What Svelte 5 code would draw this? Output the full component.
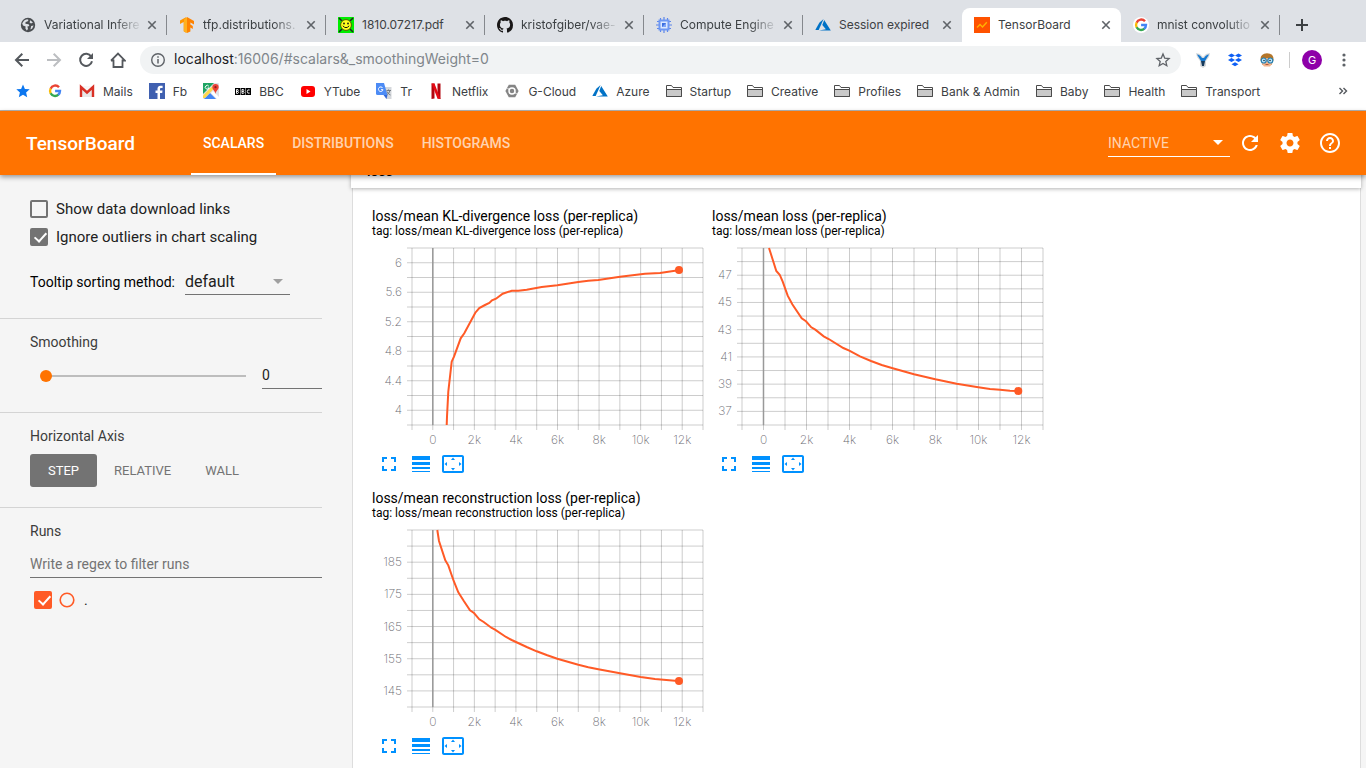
<script>
  const tabs = [
    { icon: 'globe', title: 'Variational Infere', fade: true },
    { icon: 'tf', title: 'tfp.distributions.', fade: true },
    { icon: 'smile', title: '1810.07217.pdf' },
    { icon: 'github', title: 'kristofgiber/vae-', fade: true },
    { icon: 'chip', title: 'Compute Engine', fade: true },
    { icon: 'azure', title: 'Session expired' },
    { icon: 'tb', title: 'TensorBoard', active: true },
    { icon: 'googleround', title: 'mnist convolutio', fade: true },
  ];
  const bookmarks = [
    { icon: 'star' }, { icon: 'google' }, { icon: 'gmail', title: 'Mails' }, { icon: 'fb', title: 'Fb' },
    { icon: 'maps' }, { icon: 'bbc', title: 'BBC' }, { icon: 'yt', title: 'YTube' }, { icon: 'tr', title: 'Tr' },
    { icon: 'netflix', title: 'Netflix' }, { icon: 'gcloud', title: 'G-Cloud' }, { icon: 'azure', title: 'Azure' },
    { icon: 'folder', title: 'Startup' }, { icon: 'folder', title: 'Creative' }, { icon: 'folder', title: 'Profiles' },
    { icon: 'folder', title: 'Bank & Admin' }, { icon: 'folder', title: 'Baby' }, { icon: 'folder', title: 'Health' },
    { icon: 'folder', title: 'Transport' },
  ];
  const xTicks = ['0', '2k', '4k', '6k', '8k', '10k', '12k'];
  const charts = [
    {
      title: 'loss/mean KL-divergence loss (per-replica)', left: 40, rows: 12, first: 1,
      labels: ['6', '5.6', '5.2', '4.8', '4.4', '4'],
      points: [[34.7,177],[35,168.7],[36.3,143.7],[39.7,113.7],[42,108.7],[48.7,90.3],[52.3,85.3],[63.3,64.7],[67.3,60],[73,57],[77.3,55],[80,52.3],[84,50.7],[90.7,45.7],[99.7,42.7],[106.3,42.7],[114.7,41.7],[129.7,39],[145.3,37.3],[166.3,34],[176.3,32.7],[186.3,32],[208,28.7],[233,25.7],[248,25],[263,22.7],[267,22]],
    },
    {
      title: 'loss/mean loss (per-replica)', left: 30, rows: 13, first: 2,
      labels: ['47', '45', '43', '41', '39', '37'],
      points: [[27,0],[29,6.3],[34.3,23],[37.7,26.7],[40.7,33.7],[45.7,47.7],[50.3,56.3],[59.7,70.3],[64,73.3],[69.3,79.3],[73.3,81.7],[81.7,88.3],[86.7,91],[101.3,100],[107.3,102.7],[118,108.3],[129,113],[139.7,117],[150.7,120.3],[172,126.3],[193.3,131.3],[214.7,135.7],[236.3,139.3],[248,141],[258,141.7],[268,142.7],[276.3,143]],
    },
    {
      title: 'loss/mean reconstruction loss (per-replica)', left: 40, rows: 11, first: 2,
      labels: ['185', '175', '165', '155', '145'],
      points: [[25.3,0],[27,11],[33.3,30.3],[36.3,35.3],[41.7,51],[46.3,62.3],[52,71.3],[58,80.3],[62,83],[67.3,89.3],[71.7,92],[79.7,98],[83,99.7],[94,107],[99.7,110],[114.7,117],[124.7,121.3],[135.3,125.3],[145.3,128.7],[166.3,134.7],[176.3,137.3],[186.3,139.3],[208,143.3],[228.7,147],[243,149],[263,150.7],[267,151]],
    },
  ];
  const H = 177;
  let showLinks = $state(false);
  let ignoreOutliers = $state(true);
  let runOn = $state(true);
  let smoothing = $state(0);
  let axis = $state('STEP');
  let pane = $state('SCALARS');
</script>

{#snippet glyph(name)}
  <svg class="fav" width="16" height="16" viewBox="0 0 16 16" aria-hidden="true">
    {#if name === 'globe'}
      <circle cx="8" cy="8" r="7.2" fill="#4a4d51" />
      <path d="M2.2 6.5C3.2 4 5 2.6 7.2 2.2L8.6 3 7.4 4.6 5.6 5 5.4 6.8 8.6 7.2 9.4 9 7.4 9.6 8 12 6.8 13.6 5.4 11.4 5.6 9.4 3 8.4ZM10.2 3.2 13 5.4 11 6.6 9.6 5.4ZM11.2 9 13.6 8.6 12.2 11.6 10.4 12.6Z" fill="#dee1e6" />
    {:else if name === 'tf'}
      <path d="M7.4 0 1 3.6V7l3.6-2v9.2L7.4 16Z" fill="#ff9500" />
      <path d="M8 0 15 4v3.4l-3.6-2v2.2l2.4 1.4v3l-2.4-1.4v4L8 16Z" fill="#ff8200" />
      <path d="M5 2.5 8 .3v15.6l-3-1.7Z" fill="#ffb01e" />
    {:else if name === 'smile'}
      <rect width="16" height="16" fill="#00ee00" />
      <path d="M1 1 4 4M15 1l-3 3M1 15l3-3M15 15l-3-3" stroke="#222" stroke-width="1.5" />
      <circle cx="8" cy="8" r="5.4" fill="#ffff20" stroke="#554a00" stroke-width=".9" />
      <circle cx="6" cy="6.5" r=".9" fill="#111" /><circle cx="10" cy="6.5" r=".9" fill="#111" />
      <path d="M4.8 8.8Q8 12.5 11.2 8.8" fill="none" stroke="#111" />
    {:else if name === 'github'}
      <path fill="#191717" d="M8 0C3.58 0 0 3.58 0 8c0 3.54 2.29 6.53 5.47 7.59.4.07.55-.17.55-.38 0-.19-.01-.82-.01-1.49-2.01.37-2.53-.49-2.69-.94-.09-.23-.48-.94-.82-1.13-.28-.15-.68-.52-.01-.53.63-.01 1.08.58 1.23.82.72 1.21 1.87.87 2.33.66.07-.52.28-.87.51-1.07-1.78-.2-3.64-.89-3.64-3.95 0-.87.31-1.59.82-2.15-.08-.2-.36-1.02.08-2.12 0 0 .67-.21 2.2.82.64-.18 1.32-.27 2-.27s1.36.09 2 .27c1.53-1.04 2.2-.82 2.2-.82.44 1.1.16 1.92.08 2.12.51.56.82 1.27.82 2.15 0 3.07-1.87 3.75-3.65 3.95.29.25.54.73.54 1.48 0 1.07-.01 1.93-.01 2.2 0 .21.15.46.55.38A8.01 8.01 0 0 0 16 8c0-4.42-3.58-8-8-8Z" />
    {:else if name === 'chip'}
      <path d="M4.5 1v14M8 0v16M11.5 1v14M1 4.5h14M0 8h16M1 11.5h14" stroke="#5c85ea" stroke-width="1.2" />
      <rect x="2.5" y="2.5" width="11" height="11" fill="#6f98f3" />
      <rect x="4.5" y="4.5" width="7" height="7" fill="#dce8ff" />
      <path d="M6 6h4v4H6Z" fill="#3c6fe0" /><path d="M6 10l4-4v4Z" fill="#7fa5f8" />
    {:else if name === 'azure'}
      <path d="M8.6 2 4.3 5.8.3 13h3.4Z" fill="#0072c6" />
      <path d="M9.2 3 7.3 8l3.6 4.3L4 13.6h11.8Z" fill="#0072c6" />
    {:else if name === 'tb'}
      <rect width="16" height="16" fill="#ff5200" />
      <path d="M3 10.5 6 7.5 8.5 10 12.8 5.2" fill="none" stroke="#ffb300" stroke-width="1.4" />
    {:else if name === 'google' || name === 'googleround'}
      {#if name === 'googleround'}<circle cx="8" cy="8" r="8" fill="#fff" />{/if}
      <g fill="none" stroke-width="2.4">
        <path d="M12 4.3A5 5 0 0 0 3.6 5.7" stroke="#ea4335" />
        <path d="M3.7 5.5a5 5 0 0 0 0 5" stroke="#fbbc05" />
        <path d="M3.6 10.3a5 5 0 0 0 7.8 1.3" stroke="#34a853" />
        <path d="M11.2 11.8A5 5 0 0 0 13 8H8.1" stroke="#4285f4" />
      </g>
    {:else if name === 'star'}
      <path d="m8 1.5 1.9 4.4 4.8.4-3.6 3.2 1.1 4.7L8 11.7l-4.2 2.5 1.1-4.7L1.3 6.3l4.8-.4Z" fill="#0b76ef" />
    {:else if name === 'gmail'}
      <path d="M1 3h14v11H1Z" fill="#e8e8e8" />
      <path d="M3 4.5 8 9l5-4.5V3H3Z" fill="#f7f7f7" />
      <path d="M2 14V4l6 5.5L14 4v10" fill="none" stroke="#d93025" stroke-width="2.4" />
    {:else if name === 'fb'}
      <rect width="16" height="16" fill="#4060b0" />
      <path d="M11 16v-6h2.2l.3-2.4H11V6.2c0-.8.3-1.2 1.3-1.2h1.3V2.7h-2C9.4 2.6 8.500 4 8.500 5.800v1.800H6.500V10h2v6Z" fill="#fff" />
    {:else if name === 'maps'}
      <rect width="16" height="16" rx="1" fill="#dfe3e8" />
      <path d="M0 0h11L0 11Z" fill="#1fa463" /><path d="M1 16 7 10l6 6Z" fill="#4285f4" />
      <path d="M0 12.5 9 3.500l2 2L2 15H0Z" fill="#ffd84c" /><path d="m8 10 2-2 6 6v2h-2Z" fill="#fff" />
      <path d="M5.800 3.200a1.900 1.900 0 1 0 .2 1.800H4.500" fill="none" stroke="#fff" />
      <path d="M12.500 1a3.200 3.200 0 0 0-3.200 3.200c0 2.400 2.700 3.200 3.200 6.800.5-3.600 3.200-4.400 3.200-6.800A3.200 3.200 0 0 0 12.500 1Z" fill="#ea4335" /><circle cx="12.5" cy="4.2" r="1.1" fill="#8c1d18" />
    {:else if name === 'bbc'}
      <g fill="#000"><rect x="0" y="5" width="5" height="7" /><rect x="5.5" y="5" width="5" height="7" /><rect x="11" y="5" width="5" height="7" /></g>
      <g fill="none" stroke="#fff" stroke-width=".9"><path d="M1.500 6.500h1.400q.8 1-.1 1.900h-1.300 1.400q1.200 1 0 2H1.500ZM7 6.500h1.400q.8 1-.1 1.900H7h1.400q1.200 1 0 2H7ZM14.700 7q-2.400-1-2.400 1.500t2.400 1.600" /></g>
    {:else if name === 'yt'}
      <rect x="1" y="3" width="14" height="11" rx="3" fill="#f00" /><path d="m6.500 6 4 2.500-4 2.500Z" fill="#fff" />
    {:else if name === 'tr'}
      <path d="M6 4h9.500v12H10Z" fill="#d5d8dc" /><path d="M0 0h8l3.500 12H1.500Q0 12 0 10.500Z" fill="#4c8bf5" />
      <path d="m7.500 12 3 4 1-4Z" fill="#3367d6" />
      <path d="M6.700 5A2.300 2.300 0 1 0 7 6.700H5" fill="none" stroke="#fff" /><path d="M10.500 7.500H15M12.500 6.500v1M14 7.500q-.8 3.200-3 4M11 8.500q1 2.500 3.500 3.500" fill="none" stroke="#6b747c" stroke-width=".9" />
    {:else if name === 'netflix'}
      <path d="M3.500.5h3v15l-3 .5ZM9.500.5h3V16l-3-.5Z" fill="#b1060f" /><path d="M3.500.5h3l6 15.500-3-.5Z" fill="#e50914" />
    {:else if name === 'gcloud'}
      <path d="M4.800 1.800h6.400L14.600 8l-3.400 6.200H4.800L1.400 8Z" fill="#858585" /><circle cx="8" cy="8" r="3" fill="none" stroke="#fff" stroke-width="1.5" /><path d="M3.500 5.500l2 1M12.500 10.500l-2-1" stroke="#fff" />
    {:else if name === 'folder'}
      <path d="M.5 13.500v-11h5l1.500 2h8.500v9Z" fill="#fff" stroke="#4b4b4b" />
      <path d="M.5 13.500v-7h15v7Z" fill="#c9c9c9" stroke="#4b4b4b" />
    {/if}
  </svg>
{/snippet}

{#snippet mat(d)}
  <svg width="24" height="24" viewBox="0 0 24 24" fill="currentColor" aria-hidden="true"><path {d} /></svg>
{/snippet}

<div class="window">
  <div class="strip">
    {#each tabs as t}
      <div class="tab" class:active={t.active}>
        {@render glyph(t.icon)}
        <span class="ttl" class:fade={t.fade}>{t.title}</span>
        <button class="close" aria-label="Close tab">
          <svg width="16" height="16" viewBox="0 0 16 16"><path d="m4.300 4.300 7.400 7.400m0-7.400-7.400 7.400" stroke="#5f6368" stroke-width="1.6" /></svg>
        </button>
      </div>
    {/each}
    <button class="plus" aria-label="New tab"><svg width="16" height="16" viewBox="0 0 16 16"><path d="M8 2v12M2 8h12" stroke="#3c4043" stroke-width="2" /></svg></button>
  </div>

  <div class="toolbar">
    <button class="nav" aria-label="Back"><svg width="16" height="16" viewBox="0 0 16 16"><path d="M15 8H2.500M8.300 1.700 2 8l6.300 6.300" fill="none" stroke="#54585d" stroke-width="2" /></svg></button>
    <button class="nav" aria-label="Forward"><svg width="16" height="16" viewBox="0 0 16 16"><path d="M1 8h12.500M7.700 1.700 14 8l-6.300 6.300" fill="none" stroke="#bcbec1" stroke-width="2" /></svg></button>
    <button class="nav" aria-label="Reload"><svg width="16" height="16" viewBox="0 0 16 16"><path d="M13.200 4.600A6 6 0 1 0 14 9.200" fill="none" stroke="#54585d" stroke-width="2" /><path d="M15 1v6H9Z" fill="#54585d" /></svg></button>
    <button class="nav" aria-label="Home"><svg width="16" height="16" viewBox="0 0 16 16"><path d="M3.500 7.500V15h9V7.500M1 8.700 8 1.600l7 7.100h-3M1 8.700h3" fill="none" stroke="#54585d" stroke-width="1.8" /></svg></button>
    <div class="pill">
      <svg width="16" height="16" viewBox="0 0 16 16"><circle cx="8" cy="8" r="6.3" fill="none" stroke="#5f6368" stroke-width="1.4" /><path d="M8 7v4.500M8 4.300v1.500" stroke="#5f6368" stroke-width="1.5" /></svg>
      <span class="url"><b>localhost</b>:16006/#scalars&amp;_smoothingWeight=0</span>
      <svg class="fav" width="16" height="16" viewBox="0 0 16 16"><path d="m8 2 1.700 4.100 4.400.4-3.300 2.900 1 4.300L8 11.400l-3.800 2.300 1-4.300L1.900 6.500l4.400-.4Z" fill="none" stroke="#5f6368" stroke-width="1.3" /></svg>
    </div>
    <div class="exts">
      <svg width="16" height="16" viewBox="0 0 16 16"><path d="m1 1 4 1 3 3 3-3 4-1-1 4-3 4v5l-3 2-3-2V9L2 5Z" fill="#d5d8da" /><path d="M2 2.500q3 0 5 3.500h2q2-3.500 5-3.500l-4 6.500H6Z" fill="#1579d1" /><path d="M6 9h4L9 14H7Z" fill="#163a5c" /></svg>
      <svg width="16" height="16" viewBox="0 0 16 16" fill="#0d5ff5"><path d="m4.500 1.500 3.500 2-3.500 2-3.500-2ZM11.500 1.500l3.500 2-3.500 2-3.500-2ZM4.500 6 8 8l-3.500 2L1 8ZM11.500 6 15 8l-3.500 2L8 8ZM8 10.300l3.500 2-3.500 2-3.500-2Z" /></svg>
      <svg width="16" height="16" viewBox="0 0 16 16"><path d="M1.500 8Q1 1.500 8 1.200 15 1.500 14.500 8l-2 5H3.500Z" fill="#b5762a" /><path d="M3 6h10v6l-2 2.500H5L3 12Z" fill="#f2b48c" /><path d="M6.500 12.500h3" stroke="#b0563a" /><circle cx="4.700" cy="8.500" r="2.500" fill="#bfe6fb" stroke="#2380b5" stroke-width="1.2" /><circle cx="11.300" cy="8.500" r="2.500" fill="#bfe6fb" stroke="#2380b5" stroke-width="1.2" /><circle cx="5" cy="8.500" r=".8" fill="#134" /><circle cx="11" cy="8.500" r=".8" fill="#134" /></svg>
    </div>
    <span class="bar"></span>
    <span class="avatar">G</span>
    <button class="nav" aria-label="Menu"><svg width="16" height="16" viewBox="0 0 16 16" fill="#5f6368"><circle cx="8" cy="3" r="1.6" /><circle cx="8" cy="8" r="1.6" /><circle cx="8" cy="13" r="1.6" /></svg></button>
  </div>

  <nav class="marks">
    {#each bookmarks as b}
      <a href="#bookmark" aria-label={b.title ?? b.icon}>{@render glyph(b.icon)}{#if b.title}<span>{b.title}</span>{/if}</a>
    {/each}
    <button class="more" aria-label="More bookmarks"><svg width="10" height="10" viewBox="0 0 10 10"><path d="m1.500 2 3 3-3 3M5.500 2l3 3-3 3" fill="none" stroke="#54585d" stroke-width="1.4" /></svg></button>
  </nav>

  <header>
    <h1>TensorBoard</h1>
    <div class="panes">
      {#each ['SCALARS', 'DISTRIBUTIONS', 'HISTOGRAMS'] as p}
        <button class:on={pane === p} onclick={() => (pane = p)}>{p}</button>
      {/each}
    </div>
    <div class="drop inactive">
      <select aria-label="Inactive dashboards"><option>INACTIVE</option></select>
      <svg width="10" height="5" viewBox="0 0 10 5"><path d="M0 0h10L5 5Z" fill="currentColor" /></svg>
    </div>
    <div class="acts">
      <button aria-label="Reload data">{@render mat('M17.65 6.35C16.2 4.9 14.21 4 12 4c-4.42 0-7.99 3.58-7.99 8s3.57 8 7.99 8c3.73 0 6.84-2.55 7.73-6h-2.08c-.82 2.33-3.04 4-5.65 4-3.31 0-6-2.69-6-6s2.69-6 6-6c1.66 0 3.14.69 4.22 1.78L13 11h7V4l-2.35 2.35z')}</button>
      <button aria-label="Settings">{@render mat('M19.43 12.98c.04-.32.07-.64.07-.98s-.03-.66-.07-.98l2.11-1.65c.19-.15.24-.42.12-.64l-2-3.46c-.12-.22-.39-.3-.61-.22l-2.49 1c-.52-.4-1.08-.73-1.69-.98l-.38-2.65C14.46 2.18 14.25 2 14 2h-4c-.25 0-.46.18-.49.42l-.38 2.65c-.61.25-1.17.59-1.69.98l-2.49-1c-.23-.09-.49 0-.61.22l-2 3.46c-.13.22-.07.49.12.64l2.11 1.65c-.04.32-.07.65-.07.98s.03.66.07.98l-2.11 1.65c-.19.15-.24.42-.12.64l2 3.46c.12.22.39.3.61.22l2.49-1c.52.4 1.08.73 1.69.98l.38 2.65c.03.24.24.42.49.42h4c.25 0 .46-.18.49-.42l.38-2.65c.61-.25 1.17-.59 1.69-.98l2.49 1c.23.09.49 0 .61-.22l2-3.46c.12-.22.07-.49-.12-.64l-2.11-1.65zM12 15.5c-1.93 0-3.5-1.57-3.5-3.5s1.57-3.5 3.5-3.5 3.5 1.57 3.5 3.5-1.57 3.5-3.5 3.5z')}</button>
      <button aria-label="Help">{@render mat('M11 18h2v-2h-2v2zm1-16C6.48 2 2 6.48 2 12s4.48 10 10 10 10-4.48 10-10S17.52 2 12 2zm0 18c-4.41 0-8-3.59-8-8s3.59-8 8-8 8 3.59 8 8-3.59 8-8 8zm0-14c-2.21 0-4 1.79-4 4h2c0-1.1.9-2 2-2s2 .9 2 2c0 2-3 1.75-3 5h2c0-2.25 3-2.5 3-5 0-2.21-1.79-4-4-4z')}</button>
    </div>
  </header>

  <div class="body">
    <aside>
      <section class="first">
        <label class="check"><input type="checkbox" bind:checked={showLinks} />Show data download links</label>
        <label class="check"><input type="checkbox" bind:checked={ignoreOutliers} />Ignore outliers in chart scaling</label>
        <div class="sort">
          <label for="sort">Tooltip sorting method:</label>
          <div class="drop">
            <select id="sort"><option>default</option></select>
            <svg width="10" height="5" viewBox="0 0 10 5"><path d="M0 0h10L5 5Z" fill="#a0a0a0" /></svg>
          </div>
        </div>
      </section>
      <section>
        <h3 id="smooth">Smoothing</h3>
        <div class="slide">
          <input type="range" min="0" max="0.999" step="0.001" aria-labelledby="smooth" bind:value={smoothing} />
          <input class="num" type="text" aria-labelledby="smooth" bind:value={smoothing} />
        </div>
      </section>
      <section>
        <h3>Horizontal Axis</h3>
        <div class="axis">
          {#each ['STEP', 'RELATIVE', 'WALL'] as a}
            <button class:on={axis === a} onclick={() => (axis = a)}>{a}</button>
          {/each}
        </div>
      </section>
      <section class="runs">
        <h3>Runs</h3>
        <input class="regex" type="text" placeholder="Write a regex to filter runs" aria-label="Write a regex to filter runs" />
        <label class="check run"><input type="checkbox" bind:checked={runOn} /><svg width="16" height="16" viewBox="0 0 16 16"><circle cx="8" cy="8" r="6.8" fill="none" stroke="#ff5a26" stroke-width="1.6" /></svg>.</label>
      </section>
    </aside>

    <main>
      <div class="cat">loss</div>
      <div class="cards">
        {#each charts as c}
          {@const w = 331 - c.left}
          {@const u = w / 14}
          {@const r = H / c.rows}
          {@const end = c.points[c.points.length - 1]}
          <article>
            <h2>{c.title}</h2>
            <p>tag: {c.title}</p>
            <svg class="plot" width="332" height="207" viewBox="0 0 332 207" role="img" aria-label={c.title}>
              <g transform="translate({c.left} 5)">
                <g stroke="#000" stroke-opacity=".2">
                  {#each { length: 15 } as _, i}<line x1={i * u} x2={i * u} y1="0" y2={H + 5} />{/each}
                  {#each { length: c.rows + 1 } as _, i}<line x1="-5" x2={w} y1={i * r} y2={i * r} />{/each}
                </g>
                <line x1={u} x2={u} y1="0" y2={H} stroke="#999" stroke-width="1.5" />
                {#each xTicks as t, i}<text x={(i * 2 + 1) * u} y="196" text-anchor="middle">{t}</text>{/each}
                {#each c.labels as t, i}<text x="-10" y={(c.first + i * 2) * r + 4} text-anchor="end">{t}</text>{/each}
                <polyline points={c.points.map((p) => p.join(',')).join(' ')} fill="none" stroke="#ff5a26" stroke-width="2" />
                <circle cx={end[0]} cy={end[1]} r="4" fill="#ff5a26" />
              </g>
            </svg>
            <div class="tools">
              <button aria-label="Toggle full size">{@render mat('M7 14H5v5h5v-2H7v-3zm-2-4h2V7h3V5H5v5zm12 7h-3v2h5v-5h-2v3zM14 5v2h3v3h2V5h-5z')}</button>
              <button aria-label="Toggle log scale">{@render mat('M3 17h18v-2H3v2zm0 3h18v-1H3v1zm0-7h18v-3H3v3zm0-9v4h18V4H3z')}</button>
              <button aria-label="Fit domain to data">{@render mat('M12.01 5.5L10 8h4l-1.990-2.500zM18 10v4l2.500-1.990L18 10zM6 10l-2.500 2.010L6 14v-4zm8 6h-4l2.010 2.500L14 16zm7-13H3c-1.1 0-2 .9-2 2v14c0 1.1.9 2 2 2h18c1.1 0 2-.9 2-2V5c0-1.1-.9-2-2-2zm0 16.010H3V4.990h18v14.020z')}</button>
            </div>
          </article>
        {/each}
      </div>
    </main>
  </div>
</div>

<style>
  * { box-sizing: border-box; }
  :global(body) { overflow: hidden; }
  button { border: 0; padding: 0; background: none; font: inherit; color: inherit; cursor: pointer; display: flex; align-items: center; justify-content: center; }
  svg { display: block; flex: none; }
  input, select { font: inherit; color: inherit; border: 0; border-radius: 0; padding: 0; background: none; outline: 0; appearance: none; margin: 0; }
  h1, h2, h3, p { margin: 0; font-weight: 400; }
  .window { height: 100vh; display: flex; flex-direction: column; overflow: hidden; font-family: Roboto, sans-serif; background: #f5f5f5; }

  .strip, .toolbar, .marks { font-family: Inter, sans-serif; font-size: 12px; color: #3c4043; display: flex; align-items: center; flex: none; }
  .strip { height: 42px; padding: 8px 8px 0; background: #dee1e6; }
  .tab { flex: 0 1 159px; min-width: 0; height: 34px; padding: 0 7px 0 12px; display: flex; align-items: center; position: relative; }
  .tab::after { content: ''; position: absolute; right: 0; top: 7px; width: 1px; height: 20px; background: #85888d; }
  .tab.active::after, .tab:has(+ .active)::after { display: none; }
  .tab.active { background: #fff; border-radius: 8px 8px 0 0; }
  .ttl { flex: 1; min-width: 0; margin: 0 0 0 8px; line-height: 18px; white-space: nowrap; overflow: hidden; }
  .fade { mask-image: linear-gradient(90deg, #000 70%, transparent 98%); }
  .close { width: 16px; height: 16px; }
  .plus { width: 28px; height: 28px; margin-left: 8px; }

  .toolbar { height: 36px; padding: 0 14px; background: #fff; }
  .nav { width: 16px; height: 16px; margin-right: 16px; }
  .toolbar .nav:last-child { margin: 0; }
  .pill { flex: 1; height: 28px; margin-left: -2px; padding: 0 10px; border-radius: 14px; background: #f1f3f4; display: flex; align-items: center; gap: 8px; }
  .url { flex: 1; font-size: 14px; line-height: 18px; padding-bottom: 2px; color: #80868b; }
  .url b { font-weight: 400; color: #202124; }
  .exts { display: flex; gap: 16px; margin: 0 14px; }
  .bar { width: 1px; height: 16px; background: #ccc; }
  .avatar { width: 20px; height: 20px; margin: 0 14px 0 12px; border-radius: 50%; background: #8e00a8; color: #fff; font-size: 11px; line-height: 20px; text-align: center; }

  .marks { height: 33px; padding: 0 18px 6px 15px; gap: 16px; background: #fff; border-bottom: 1px solid #b6b4b2; }
  .marks a { display: flex; gap: 8px; align-items: center; color: inherit; text-decoration: none; white-space: nowrap; }
  .more { margin-left: auto; }

  header { flex: none; height: 64px; display: flex; align-items: center; padding: 0 24px 0 26px; background: #ff7300; color: #fff; z-index: 2; box-shadow: 0 2px 5px rgba(0, 0, 0, .4); }
  h1 { font-size: 19px; font-weight: 500; width: 165px; }
  .panes { display: flex; gap: 4px; height: 64px; flex: 1; }
  .panes button { padding: 2px 12px 0; font-size: 14px; font-weight: 500; color: rgba(255, 255, 255, .7); border-bottom: 2px solid transparent; }
  .panes button.on { color: #fff; border-color: #fff; }
  .drop { position: relative; }
  .drop select { width: 100%; }
  .drop svg { position: absolute; right: 7px; top: 50%; margin-top: -3px; pointer-events: none; }
  .inactive { width: 122px; }
  .inactive select { display: block; height: 28px; font-size: 14px; color: rgba(255, 255, 255, .7); border-bottom: 1px solid #fff; }
  .acts { display: flex; gap: 16px; margin-left: 8px; }

  .body { flex: 1; min-height: 0; display: flex; overflow: hidden; }
  aside { width: 352px; flex: none; padding-right: 30px; }
  section { padding: 13px 0 0 30px; height: 95px; border-bottom: 1px solid #d4d4d4; }
  section.first { height: 144px; padding-top: 20px; }
  section:nth-child(2) { height: 94px; }
  section.runs { height: auto; border: 0; }
  h3 { font-size: 14px; line-height: 20px; color: #3c3c3c; }
  .check { display: flex; align-items: center; gap: 8px; height: 28px; font-size: 15px; color: #212121; }
  .check input { width: 18px; height: 18px; border: 2px solid #737373; border-radius: 2px; position: relative; }
  .check input:checked { background: #737373; }
  .check input:checked::after { content: ''; position: absolute; left: 5px; top: 0; width: 5px; height: 10px; border: solid #fff; border-width: 0 2px 2px 0; transform: rotate(42deg); }
  .sort { display: flex; align-items: center; gap: 10px; font-size: 14px; padding-top: 17px; }
  .sort .drop { width: 105px; }
  .sort select { display: block; height: 27px; font-size: 16px; color: #212121; border-bottom: 1px solid #737373; }
  .slide { display: flex; align-items: center; justify-content: space-between; padding: 9px 0 0 10px; }
  .slide input[type='range'] { width: 206px; height: 12px; margin-top: 2px; background: linear-gradient(#bdbdbd, #bdbdbd) 6px 5px / 200px 2px no-repeat; }
  .slide input::-webkit-slider-thumb { appearance: none; width: 12px; height: 12px; border-radius: 50%; background: #ff7300; }
  .slide .num { width: 60px; height: 28px; font-size: 14px; color: #212121; border-bottom: 1px solid #737373; }
  .axis { display: flex; padding-top: 8px; font-size: 13px; color: #737373; }
  .axis button { height: 33px; padding: 0 17px; border-radius: 3px; }
  .axis button.on { background: #737373; color: #fff; padding: 0 18px; }
  .regex { display: block; width: 100%; height: 28px; margin-top: 9px; font-size: 14px; border-bottom: 1px solid #737373; }
  .regex::placeholder { color: #737373; }
  .run { margin: 8px 0 0 4px; font-size: 14px; }
  .run input { border-color: #ff5a26; }
  .run input:checked { background: #ff5a26; }
  .run svg { margin: 0 1px 0 -1px; }

  main { flex: 1; min-width: 0; margin-right: 5px; display: flex; flex-direction: column; }
  .cat { flex: none; height: 41px; margin: -28px 0 0 -1px; padding: 17px 16px 0; line-height: 14px; font-size: 14px; font-weight: 500; background: #fff; box-shadow: 0 1px 4px rgba(0, 0, 0, .3); z-index: 1; }
  .cards { flex: 1; display: flex; flex-wrap: wrap; align-content: flex-start; gap: 10px; padding: 20px 19px; background: #fff; border: solid #ddd; border-width: 0 1px; }
  article { width: 330px; height: 272px; }
  h2 { font-size: 14px; line-height: 16px; }
  article p { font-size: 12px; line-height: 14px; padding-bottom: 5px; }
  .plot { overflow: visible; }
  text { font-family: Inter, sans-serif; font-size: 12px; font-weight: 200; fill: #6b6b73; }
  .tools { display: flex; gap: 8px; padding: 2px 5px; color: #0091ff; }
</style>
